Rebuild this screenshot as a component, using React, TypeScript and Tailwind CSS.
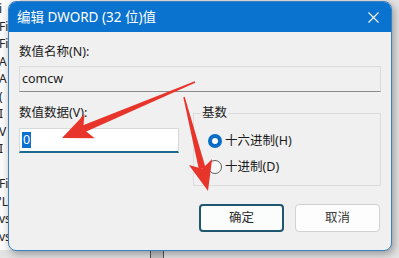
import React from 'react';

const font = { fontFamily: '"Noto Sans", "Noto Sans CJK SC", sans-serif' };

// Background window fragments peeking out on the left edge
const BackdropLines = ['i', 'Fir', 'Fi', 'A', 'A', '(', 'I', 'V', 'I', '', 'Fir', "'L", 'vs', 'vs'];

// Red annotation arrows drawn over the dialog
const Arrows: React.FC = () => (
  <svg className="pointer-events-none absolute left-0 top-0" width="399" height="258" viewBox="0 0 399 258">
    <polygon points="195.3,82.7 194.7,81.3 81.8,125.8 84.6,132.2" fill="#e8352c" />
    <polygon points="62,138 94.7,138.3 83.2,129 84.5,114.3" fill="#e8352c" />
    <polygon points="184.7,96.8 183.3,97.2 198.9,169.6 205.6,167.8" fill="#e8352c" />
    <polygon points="208,191 212.1,158.9 202.3,168.7 188.9,164.9" fill="#e8352c" />
  </svg>
);

const Radio: React.FC<{ checked?: boolean; label: string }> = ({ checked, label }) => (
  <div className="flex h-[16px] items-center">
    {checked ? (
      <span className="flex h-[14px] w-[14px] items-center justify-center rounded-full bg-[#0a6cc4]">
        <span className="h-[6px] w-[6px] rounded-full bg-white" />
      </span>
    ) : (
      <span className="h-[14px] w-[14px] rounded-full border border-[#5c5c5c] bg-[#f8f8f8]" />
    )}
    <span className="ml-[3px] text-[12.5px] text-[#1b1b1b]">{label}</span>
  </div>
);

const EditDwordDialog: React.FC = () => (
  <div className="absolute left-[8px] top-[1px] flex h-[250px] w-[384px] flex-col overflow-hidden rounded-[8px] border border-[#3b7fc0] bg-[#f0f0f0] shadow-[2px_3px_8px_rgba(0,0,0,0.35)]">
    {/* Title bar */}
    <div className="flex h-[30px] shrink-0 items-center justify-between bg-[#0a72cf] pl-[8px] pr-[10px]">
      <span className="text-[13.5px] text-white">编辑 DWORD (32 位)值</span>
      <svg width="11" height="11" viewBox="0 0 11 11" className="mr-[2px]">
        <path d="M0.5 0.5 L10.5 10.5 M10.5 0.5 L0.5 10.5" stroke="#ffffff" strokeWidth="1.1" />
      </svg>
    </div>

    <div className="flex flex-col pl-[10px] pr-[10px]">
      <span className="mt-[12px] h-[16px] text-[12.5px] leading-[16px] text-[#1b1b1b]">数值名称(N):</span>
      <div className="mt-[6px] flex h-[26px] items-center border border-[#dadada] border-b-[#8a8a8a] bg-[#f0f0f0] pl-[2px] text-[12.5px] text-[#1b1b1b]">
        comcw
      </div>

      <div className="mt-[13px] flex">
        <div className="flex w-[160px] flex-col">
          <span className="h-[16px] text-[12.5px] leading-[16px] text-[#1b1b1b]">数值数据(V):</span>
          <div className="mt-[7px] flex h-[25px] items-center border border-[#d9d9d9] border-b-2 border-b-[#1d6a8c] bg-white pl-[2px]">
            <span className="bg-[#0a6fcf] px-[1px] text-[12.5px] leading-[16px] text-white">0</span>
          </div>
        </div>

        <fieldset className="ml-[14px] flex h-[81px] flex-1 flex-col border border-[#dcdcdc] pl-[7px]">
          <legend className="px-[1px] text-[12.5px] leading-[16px] text-[#1b1b1b]">基数</legend>
          <div className="mt-[12px] pl-[7px]">
            <Radio checked label="十六进制(H)" />
          </div>
          <div className="mt-[10px] pl-[7px]">
            <Radio label="十进制(D)" />
          </div>
        </fieldset>
      </div>

      <div className="mt-[18px] flex justify-end gap-[11px] pr-[1px]">
        <button className="flex h-[28px] w-[85px] items-center justify-center rounded-[4px] border-2 border-[#1f5670] bg-[#fbfdfd] text-[12.5px] text-[#2a2a2a]">
          确定
        </button>
        <button className="flex h-[28px] w-[85px] items-center justify-center rounded-[4px] border border-[#d2d2d2] bg-[#fdfdfd] text-[12.5px] text-[#3a3a3a]">
          取消
        </button>
      </div>
    </div>
  </div>
);

export default function App() {
  return (
    <div className="relative h-[258px] w-[399px] overflow-hidden bg-[#e4e4e4]" style={font}>
      {/* backdrop window */}
      <div className="absolute left-0 top-0 flex h-[250px] w-[20px] flex-col bg-[#fbfbfb] pt-[0px]">
        {BackdropLines.map((t, i) => (
          <span key={i} className="-ml-[1px] h-[17.5px] text-[12px] leading-[17.5px] text-[#222]">
            {t}
          </span>
        ))}
      </div>
      <div className="absolute bottom-0 left-[150px] h-[8px] w-[14px] border-x border-[#555] bg-[#c8c8c8]" />
      <EditDwordDialog />
      <Arrows />
    </div>
  );
}
